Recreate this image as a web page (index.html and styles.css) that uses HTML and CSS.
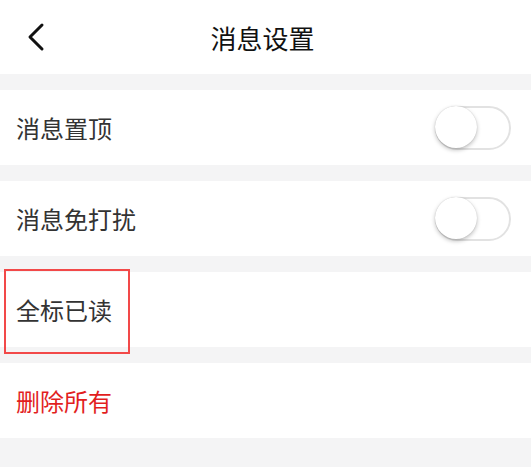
FILE: index.html
```html
<!DOCTYPE html>
<html lang="zh-CN">
<head>
  <meta charset="UTF-8" />
  <meta name="viewport" content="width=device-width, initial-scale=1.0"/>
  <title>消息设置</title>
  <link rel="stylesheet" href="styles.css">
</head>
<body>
  <header class="topbar">
    <a class="back" href="#">
      <svg width="20" height="30" viewBox="0 0 20 30">
        <path d="M16 3 L4 15 L16 27" fill="none" stroke="#111" stroke-width="3" stroke-linecap="round" stroke-linejoin="round"/>
      </svg>
    </a>
    <h1>消息设置</h1>
  </header>

  <div class="list">
    <div class="row">
      <span>消息置顶</span>
      <label class="switch"><input type="checkbox"><i></i></label>
    </div>
    <div class="row">
      <span>消息免打扰</span>
      <label class="switch"><input type="checkbox"><i></i></label>
    </div>
    <div class="row marked">
      <span>全标已读</span>
    </div>
    <div class="row danger">
      <span>删除所有</span>
    </div>
  </div>
</body>
</html>
```

FILE: styles.css
```css
body {
  margin: 0;
  background: #f4f4f5;
  font-family: "Noto Sans CJK SC", "Noto Sans", sans-serif;
  color: #333;
}

.topbar {
  height: 74px;
  background: #fff;
  display: flex;
  align-items: center;
  justify-content: center;
  position: relative;
}

.topbar h1 {
  margin: 0;
  font-size: 26px;
  font-weight: normal;
  color: #111;
  margin-left: -6px;
}

.back {
  position: absolute;
  left: 26px;
  top: 22px;
  display: block;
}

.list {
  padding-top: 16px;
  display: flex;
  flex-direction: column;
  gap: 16px;
}

.row {
  height: 75px;
  background: #fff;
  display: flex;
  align-items: center;
  justify-content: space-between;
  padding: 0 20px 0 16px;
  font-size: 24px;
  position: relative;
}

.row.marked::after {
  content: "";
  position: absolute;
  left: 4px;
  top: -3px;
  width: 122px;
  height: 81px;
  border: 2px solid #f24949;
}

.row.danger {
  color: #e21e1e;
}

.switch {
  display: block;
  position: relative;
  width: 76px;
  height: 44px;
}

.switch input {
  display: none;
}

.switch i {
  display: block;
  box-sizing: border-box;
  width: 100%;
  height: 100%;
  border: 2px solid #e2e2e2;
  border-radius: 22px;
  background: #fff;
}

.switch i::before {
  content: "";
  position: absolute;
  left: 0;
  top: 0;
  width: 42px;
  height: 42px;
  border-radius: 50%;
  background: #fff;
  box-shadow: 0 2px 4px rgba(0, 0, 0, 0.25), 0 0 1px rgba(0, 0, 0, 0.2);
}
```
